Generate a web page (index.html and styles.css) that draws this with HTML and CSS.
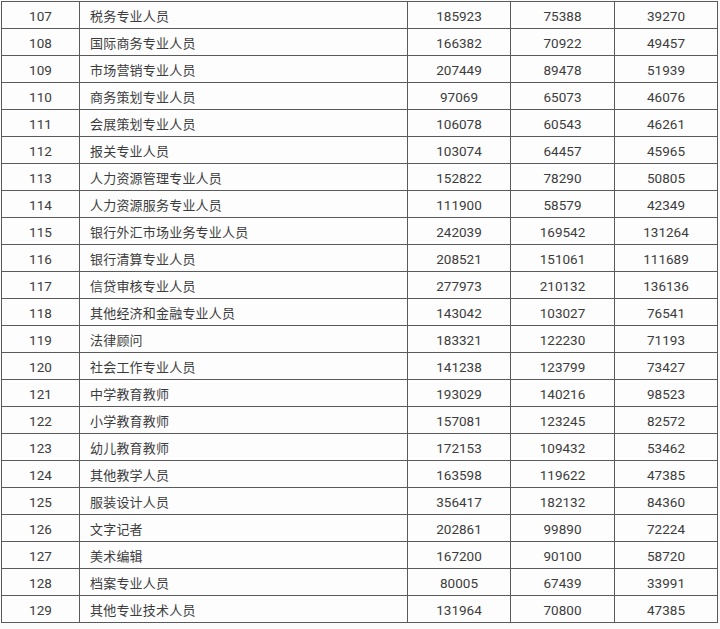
FILE: index.html
```html
<!DOCTYPE html>
<html lang="zh-CN">
<head>
<meta charset="utf-8">
<link rel="stylesheet" href="styles.css">
</head>
<body>
<table class="tbl">
<colgroup><col class="c-no"><col class="c-name"><col class="c-a"><col class="c-b"><col class="c-c"></colgroup>
<tbody>
<tr><td class="no">107</td><td class="name">税务专业人员</td><td class="num">185923</td><td class="num">75388</td><td class="num">39270</td></tr>
<tr><td class="no">108</td><td class="name">国际商务专业人员</td><td class="num">166382</td><td class="num">70922</td><td class="num">49457</td></tr>
<tr><td class="no">109</td><td class="name">市场营销专业人员</td><td class="num">207449</td><td class="num">89478</td><td class="num">51939</td></tr>
<tr><td class="no">110</td><td class="name">商务策划专业人员</td><td class="num">97069</td><td class="num">65073</td><td class="num">46076</td></tr>
<tr><td class="no">111</td><td class="name">会展策划专业人员</td><td class="num">106078</td><td class="num">60543</td><td class="num">46261</td></tr>
<tr><td class="no">112</td><td class="name">报关专业人员</td><td class="num">103074</td><td class="num">64457</td><td class="num">45965</td></tr>
<tr><td class="no">113</td><td class="name">人力资源管理专业人员</td><td class="num">152822</td><td class="num">78290</td><td class="num">50805</td></tr>
<tr><td class="no">114</td><td class="name">人力资源服务专业人员</td><td class="num">111900</td><td class="num">58579</td><td class="num">42349</td></tr>
<tr><td class="no">115</td><td class="name">银行外汇市场业务专业人员</td><td class="num">242039</td><td class="num">169542</td><td class="num">131264</td></tr>
<tr><td class="no">116</td><td class="name">银行清算专业人员</td><td class="num">208521</td><td class="num">151061</td><td class="num">111689</td></tr>
<tr><td class="no">117</td><td class="name">信贷审核专业人员</td><td class="num">277973</td><td class="num">210132</td><td class="num">136136</td></tr>
<tr><td class="no">118</td><td class="name">其他经济和金融专业人员</td><td class="num">143042</td><td class="num">103027</td><td class="num">76541</td></tr>
<tr><td class="no">119</td><td class="name">法律顾问</td><td class="num">183321</td><td class="num">122230</td><td class="num">71193</td></tr>
<tr><td class="no">120</td><td class="name">社会工作专业人员</td><td class="num">141238</td><td class="num">123799</td><td class="num">73427</td></tr>
<tr><td class="no">121</td><td class="name">中学教育教师</td><td class="num">193029</td><td class="num">140216</td><td class="num">98523</td></tr>
<tr><td class="no">122</td><td class="name">小学教育教师</td><td class="num">157081</td><td class="num">123245</td><td class="num">82572</td></tr>
<tr><td class="no">123</td><td class="name">幼儿教育教师</td><td class="num">172153</td><td class="num">109432</td><td class="num">53462</td></tr>
<tr><td class="no">124</td><td class="name">其他教学人员</td><td class="num">163598</td><td class="num">119622</td><td class="num">47385</td></tr>
<tr><td class="no">125</td><td class="name">服装设计人员</td><td class="num">356417</td><td class="num">182132</td><td class="num">84360</td></tr>
<tr><td class="no">126</td><td class="name">文字记者</td><td class="num">202861</td><td class="num">99890</td><td class="num">72224</td></tr>
<tr><td class="no">127</td><td class="name">美术编辑</td><td class="num">167200</td><td class="num">90100</td><td class="num">58720</td></tr>
<tr><td class="no">128</td><td class="name">档案专业人员</td><td class="num">80005</td><td class="num">67439</td><td class="num">33991</td></tr>
<tr><td class="no">129</td><td class="name">其他专业技术人员</td><td class="num">131964</td><td class="num">70800</td><td class="num">47385</td></tr>
</tbody>
</table>
</body>
</html>
```
FILE: styles.css
```css
html, body {
  margin: 0;
  padding: 0;
  background: #fbfbfb;
}
body {
  padding: 1px 0 0 1px;
  font-family: Roboto, "Noto Sans CJK SC", sans-serif;
  color: #3c3c3c;
}
.tbl {
  border-collapse: collapse;
  table-layout: fixed;
  width: 717px;
  background: #fdfdfd;
}
.c-no { width: 78px; }
.c-name { width: 328px; }
.c-a { width: 103px; }
.c-b { width: 104px; }
.c-c { width: 103px; }
.tbl td {
  border: 1px solid #5a5a5a;
  height: 26px;
  padding: 2px 0 0 0;
  box-sizing: border-box;
  font-size: 13.5px;
  line-height: 24px;
  text-align: center;
  white-space: nowrap;
}
.tbl tr td { height: 27px; }
.tbl td.name {
  text-align: left;
  padding-left: 10px;
  font-family: "Noto Sans CJK SC", sans-serif;
  font-size: 13px;
  letter-spacing: 0.2px;
}
```
